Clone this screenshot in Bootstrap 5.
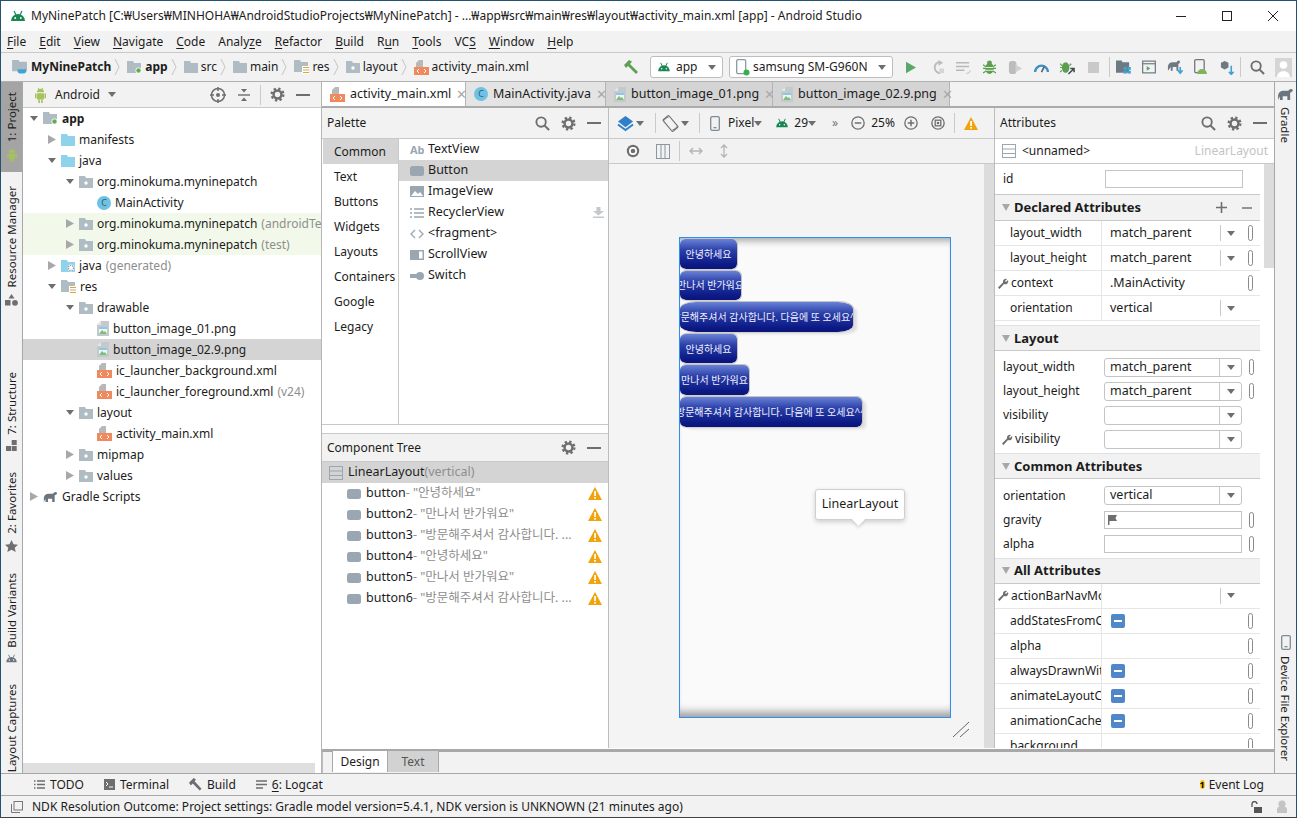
<!DOCTYPE html>
<html lang="en">
<head>
  <meta charset="UTF-8" />
  <meta name="viewport" content="width=device-width, initial-scale=1" />
  <title>MyNinePatch - Android Studio</title>
  <link href="https://cdn.jsdelivr.net/npm/bootstrap@5.3.0/dist/css/bootstrap.min.css" rel="stylesheet" />
  <style>
    html, body { margin: 0; width: 1297px; height: 818px; overflow: hidden; background: #f2f2f2; }
    body { font-family: "Noto Sans", "Noto Sans CJK KR", sans-serif; font-size: 12px; color: #1c1c1c; line-height: 1; }
    svg { flex: none; display: block; }
    u { text-underline-offset: 2px; }
    .ide-window { width: 1297px; height: 818px; border: 1px solid #23536f; border-bottom-color: #444; display: flex; flex-direction: column; }
    .title-row { height: 30px; background: #fff; padding-left: 9px; gap: 5px; flex: none; }
    .win-btns { margin-left: auto; }
    .win-btns div { width: 46px; display: flex; justify-content: center; }
    .menu-row { height: 22px; flex: none; padding-left: 6px; gap: 13px; border-bottom: 1px solid #c9c9c9; }
    .crumb-row { height: 29px; flex: none; padding-left: 11px; border-bottom: 1px solid #b0b0b0; }
    .crumb-row b { font-weight: 700; }
    .crumb { gap: 3px; }
    .crumb-sep { margin: 0 7px 0 3px; }
    .combo-btn { height: 22px; border: 1px solid #bdbdbd; border-radius: 3px; background: #fff; padding: 0 6px; }
    .combo-app { width: 73px; margin-left: 11px; gap: 5px; }
    .combo-dev { width: 164px; margin-left: 6px; gap: 3px; white-space: nowrap; }
    .caret-d { width: 0; height: 0; border-left: 4px solid transparent; border-right: 4px solid transparent; border-top: 5px solid #6e6e6e; flex: none; }
    .combo-btn .caret-d { margin-left: auto; }
    .run-icons { margin-left: 5px; }
    .slot { width: 26px; height: 20px; display: flex; align-items: center; justify-content: center; flex: none; }
    .tool-sep { width: 1px; height: 20px; background: #c9c9c9; flex: none; }
    .main-row { flex: 1 1 0; min-height: 0; display: flex; }
    .side-strip { width: 22px; flex: none; border-right: 1px solid #a8a8a8; display: flex; flex-direction: column; align-items: center; overflow: hidden; }
    .vtab { width: 21px; padding: 10px 0; display: flex; flex-direction: column-reverse; align-items: center; gap: 6px; }
    .vtab.active { background: #a4a4a4; }
    .vtab span { writing-mode: vertical-rl; transform: rotate(180deg); white-space: nowrap; font-size: 11.5px; }
    .gap-a { margin-top: 4px; }
    .gap-b { margin-top: 46px; }
    .gap-c { margin-top: 1px; }
    .right-strip { border-right: 0; border-left: 1px solid #a8a8a8; width: 22px; justify-content: space-between; }
    .right-strip .vtab { flex-direction: column; padding: 6px 0 12px; }
    .right-strip .vtab span { transform: none; }
    .project-pane { width: 299px; flex: none; border-right: 1px solid #b5b5b5; display: flex; flex-direction: column; background: #fff; }
    .pane-head { height: 26px; flex: none; background: #f2f2f2; border-bottom: 1px solid #c9c9c9; padding: 0 5px 0 11px; }
    .pane-head .slot { width: 26px; }
    .tree-list { flex: 1 1 0; min-height: 0; }
    .tree-row { height: 21px; display: flex; align-items: center; white-space: nowrap; overflow: hidden; }
    .tree-row .arrow { width: 18px; display: flex; justify-content: center; flex: none; }
    .tree-row .node { margin-right: 4px; }
    .d0 { padding-left: 2px; } .d1 { padding-left: 20px; } .d2 { padding-left: 38px; } .d3 { padding-left: 56px; }
    .no-arrow { width: 18px; flex: none; }
    .tree-row.sel, .pal-item.sel, .pal-cat.sel, .comp-row.sel { background: #d4d4d4; }
    .tree-row.test { background: #f2f9ea; }
    .hint { color: #8e8e8e; margin-left: 4px; }
    .tree-scroll { height: 10px; width: 292px; background: #dfdfdf; flex: none; }
    .work-col { flex: 1 1 0; min-width: 0; display: flex; flex-direction: column; }
    .tab-row { height: 26px; flex: none; border-bottom: 2px solid #ababab; }
    .file-tab { height: 24px; display: flex; align-items: center; gap: 5px; padding-left: 8px; border-right: 1px solid #b5b5b5; background: #d4d4d4; font-size: 12.5px; white-space: nowrap; }
    .file-tab.on { background: #fff; }
    .file-tab.mid { background: #e4e4e4; }
    .tab-a { width: 144px; } .tab-b { width: 140px; } .tab-c { width: 167px; } .tab-d { width: 177px; }
    .file-tab .tab-x { margin-left: auto; margin-right: 6px; color: #a9a9a9; font-size: 13px; }
    .edit-row { flex: 1 1 0; min-height: 0; display: flex; border-bottom: 1px solid #fff; }
    .left-col { width: 287px; flex: none; display: flex; flex-direction: column; border-right: 1px solid #bdbdbd; background: #fff; }
    .palette-box { height: 317px; flex: none; display: flex; flex-direction: column; border-bottom: 1px solid #c9c9c9; }
    .sub-head { height: 31px; flex: none; background: #f2f2f2; border-bottom: 1px solid #c9c9c9; padding: 0 0 0 5px; }
    .sub-head .tools { margin-left: auto; display: flex; padding-right: 1px; }
    .palette-body { flex: 1 1 0; display: flex; min-height: 0; }
    .pal-cats { width: 77px; flex: none; border-right: 1px solid #c9c9c9; }
    .pal-cat { height: 25px; display: flex; align-items: center; padding-left: 11px; margin-left: 1px; }
    .pal-list { flex: 1 1 0; }
    .pal-item { height: 21px; display: flex; align-items: center; padding-left: 11px; gap: 4px; font-size: 12.5px; }
    .pal-item svg:last-child:not(:first-child) { margin-left: auto; margin-right: 4px; }
    .comp-box { flex: 1 1 0; margin-top: 8px; border-top: 1px solid #c9c9c9; padding-left: 0; }
    .comp-head { height: 28px; }
    .comp-row { height: 21px; display: flex; align-items: center; white-space: nowrap; padding-left: 25px; font-size: 12.5px; }
    .comp-row.sel { padding-left: 7px; gap: 5px; }
    .comp-row .btn-ico { margin-right: 5px; }
    .comp-row .warn-ico { margin-left: auto; margin-right: 6px; }
    .comp-row .quote { color: #8e8e8e; }
    .design-col { width: 386px; flex: none; display: flex; flex-direction: column; border-right: 1px solid #bdbdbd; }
    .design-tools { height: 31px; flex: none; background: #f2f2f2; border-bottom: 1px solid #c9c9c9; padding-left: 8px; }
    .design-tools2 { height: 25px; }
    .l2 { margin-left: 2px; } .l3 { margin-left: 3px; } .l5 { margin-left: 5px; } .l6 { margin-left: 6px; } .l8 { margin-left: 8px; }
    .l9 { margin-left: 9px; } .l10 { margin-left: 10px; } .l11 { margin-left: 11px; } .l13 { margin-left: 13px; } .l16 { margin-left: 16px; } .l7 { margin-left: 7px; } .l12 { margin-left: 12px; }
    .surface-row { flex: 1 1 0; min-height: 0; display: flex; background: #f4f4f4; }
    .surface { flex: 1 1 0; padding: 73px 0 0 70px; position: relative; }
    .surface-bar { width: 10px; background: #dcdcdc; flex: none; }
    .device-frame { width: 272px; height: 481px; border: 1px solid #2f8df0; background: #fafafa; position: relative; box-shadow: inset 0 9px 7px -6px #a9a9a9, inset 0 -11px 8px -6px #9d9d9d; display: flex; flex-direction: column; align-items: flex-start; }
    .nine-btn { height: 31.6px; flex: none; border: 1px solid #c4c4c4; border-left: 0; border-bottom-color: #d0d0d0; display: flex; align-items: center; justify-content: center; white-space: nowrap; overflow: hidden; color: #eef0ff; font-size: 10px; background: linear-gradient(#6a82d6, #2b3fa8 38%, #0c1a86 85%, #0a1478); border-radius: 6px; background-clip: padding-box; }
    .nb-57 { width: 58px; } .nb-61 { width: 62px; } .nb-173 { width: 174px; border-radius: 16px / 8px; box-shadow: 5px 3px 3px -2px #ddd; }
    .nb-69 { width: 70px; } .nb-182 { width: 183px; box-shadow: 5px 3px 3px -2px #ddd; }
    .frame-tip { position: absolute; left: 135px; top: 251px; width: 90px; height: 31px; background: #fff; border: 1px solid #cfcfcf; border-radius: 3px; box-shadow: 0 2px 5px rgba(0,0,0,.18); display: flex; align-items: center; justify-content: center; font-size: 12.5px; }
    .frame-tip::after { content: ""; position: absolute; left: 38px; bottom: -5px; width: 9px; height: 9px; background: #fff; transform: rotate(45deg); box-shadow: 2px 2px 3px rgba(0,0,0,.1); }
    .resize-mark { position: absolute; left: 343px; top: 557px; }
    .attr-col { flex: 1 1 0; min-width: 0; display: flex; flex-direction: column; background: #fff; }
    .attr-top { height: 25px; flex: none; padding: 0 6px 0 7px; border-bottom: 1px solid #c9c9c9; gap: 6px; }
    .attr-top .hint2 { margin-left: auto; color: #c4c4c4; }
    .attr-body { flex: 1 1 0; min-height: 0; display: flex; overflow: hidden; }
    .attr-scroll-wrap { width: 265px; flex: none; }
    .attr-track { width: 10px; margin-left: 4px; flex: none; }
    .attr-thumb { height: 104px; background: #dcdcdc; }
    .id-row { height: 31px; padding-left: 8px; border-bottom: 1px solid #c9c9c9; }
    .id-row .plain-box { margin-left: 92px; }
    .plain-box { width: 138px; height: 18px; border: 1px solid #c4c4c4; background: #fff; }
    .sec-head { height: 26px; background: #f2f2f2; border-bottom: 1px solid #c9c9c9; font-weight: 700; font-size: 13px; padding-left: 4px; gap: 3px; }
    .sec-head .sec-tools { margin-left: auto; margin-right: 0; display: flex; }
    .tri-d { width: 0; height: 0; border-left: 4px solid transparent; border-right: 4px solid transparent; border-top: 7px solid #a8a8a8; flex: none; margin: 0 1px 0 3px; }
    .prop-row { height: 25px; display: flex; align-items: center; border-bottom: 1px solid #e6e6e6; white-space: nowrap; }
    .prop-name { width: 107px; height: 100%; flex: none; display: flex; align-items: center; padding-left: 15px; border-right: 1px solid #e6e6e6; overflow: hidden; }
    .prop-name.tool { padding-left: 3px; gap: 2px; }
    .prop-val { flex: 1 1 0; display: flex; align-items: center; padding-left: 8px; height: 100%; position: relative; font-size: 12.5px; }
    .prop-val .blue-minus { margin-left: 1px; }
    .prop-drop { margin-left: auto; width: 21px; height: 16px; border-left: 1px solid #c9c9c9; display: flex; align-items: center; justify-content: center; margin-right: 19px; }
    .prop-drop + .link-pill { margin-left: 0; }
    .link-pill { width: 5px; height: 16px; border: 1px solid #8a8a8a; border-radius: 3px; background: #fff; flex: none; }
    .prop-val .link-pill { position: absolute; left: 146px; top: 4px; }
    .form-grid { padding: 7px 0 5px 8px; display: flex; flex-direction: column; gap: 5.6px; }
    .form-line { height: 18.4px; display: flex; align-items: center; white-space: nowrap; }
    .form-line .lbl { width: 101px; flex: none; }
    .form-line .lbl.tool { display: flex; align-items: center; gap: 2px; margin-left: -1px; width: 102px; }
    .mini-combo { width: 138px; height: 19px; border: 1px solid #c4c4c4; border-radius: 3px; background: #fff; display: flex; align-items: center; padding-left: 5px; font-size: 12.5px; }
    .mini-combo .drop { margin-left: auto; width: 22px; height: 100%; border-left: 1px solid #c9c9c9; display: flex; align-items: center; justify-content: center; }
    .form-line .link-pill { margin-left: 7px; }
    .plain-box.with-flag { display: flex; align-items: center; padding-left: 3px; }
    .design-line { height: 3px; flex: none; background: #a8a8a8; }
    .design-tabs { height: 21px; flex: none; padding-left: 9px; background: #f2f2f2; border-left: 1px solid #bdbdbd; }
    .mode-tab { height: 21px; display: flex; align-items: center; justify-content: center; border-right: 1px solid #a8a8a8; border-left: 1px solid #a8a8a8; margin-top: -1px; }
    .mode-a { width: 56px; background: #fff; } .mode-b { width: 51px; background: #d2d2d2; border-left: 0; color: #555; }
    .tool-row { height: 23px; flex: none; border-top: 1px solid #a8a8a8; border-bottom: 1px solid #a8a8a8; padding-left: 33px; }
    .tool-item { gap: 5px; margin-right: 20px; }
    .event-log { margin-left: auto; margin-right: 32px; gap: 4px; }
    .status-row { height: 21px; flex: none; padding-left: 10px; gap: 9px; white-space: nowrap; }
    .status-end { margin-left: auto; margin-right: 8px; gap: 14px; }
  </style>
</head>
<body>
  <svg width="0" height="0" class="position-absolute">
    <defs>
      <symbol id="i-droid" viewBox="0 0 16 12"><path d="M1 11a7 7 0 0 1 14 0z" fill="currentColor"/><path d="M4 1l2 4M12 1l-2 4" stroke="currentColor" stroke-width="1.2"/><circle cx="5.2" cy="8" r=".9" fill="#fff"/><circle cx="10.8" cy="8" r=".9" fill="#fff"/></symbol>
      <symbol id="i-robot" viewBox="0 0 14 18"><path d="M3 6a4 4 0 0 1 8 0z" fill="#a5c25c"/><path d="M4.5 1l1 2M9.5 1l-1 2" stroke="#a5c25c"/><rect x="3" y="7" width="8" height="7" rx="1" fill="#a5c25c"/><rect x="0.8" y="7" width="1.7" height="6" rx=".8" fill="#a5c25c"/><rect x="11.5" y="7" width="1.7" height="6" rx=".8" fill="#a5c25c"/><rect x="4.5" y="14" width="1.8" height="4" fill="#a5c25c"/><rect x="7.7" y="14" width="1.8" height="4" fill="#a5c25c"/></symbol>
      <symbol id="i-folder" viewBox="0 0 14 12"><path d="M0 0h6l1 2h7v10H0z" fill="#b0bcc3"/></symbol>
      <symbol id="i-pkg" viewBox="0 0 14 12"><path d="M0 0h6l1 2h7v10H0z" fill="#b0bcc3"/><circle cx="7" cy="7" r="1.7" fill="#fff"/></symbol>
      <symbol id="i-blue" viewBox="0 0 14 12"><path d="M0 0h6l1 2h7v10H0z" fill="#8fd2ec"/></symbol>
      <symbol id="i-gen" viewBox="0 0 14 12"><path d="M0 0h6l1 2h7v10H0z" fill="#8fd2ec"/><circle cx="10" cy="8" r="3.4" fill="#fff"/><circle cx="10" cy="8" r="2.6" fill="none" stroke="#8a98a2" stroke-width="1.4" stroke-dasharray="1.2 1"/></symbol>
      <symbol id="i-res" viewBox="0 0 15 14"><path d="M0 0h6l1 2h7v10H0z" fill="#b0bcc3"/><rect x="8" y="6" width="7" height="8" fill="#fff"/><path d="M9 7.5h6M9 10h6M9 12.5h6" stroke="#d9a54a" stroke-width="1"/></symbol>
      <symbol id="i-mod" viewBox="0 0 15 13"><path d="M0 0h6l1 2h7v10H0z" fill="#b0bcc3"/><circle cx="11.5" cy="9.5" r="3" fill="#fff"/><circle cx="11.5" cy="9.5" r="2.2" fill="#5fb04a"/></symbol>
      <symbol id="i-proj" viewBox="0 0 17 15"><path d="M0 0h7l1 2h8v10H0z" fill="#aebac2"/><path d="M6 10h9v2a2.5 2.5 0 0 1-2.5 2.5h-4A2.5 2.5 0 0 1 6 12z" fill="#3fa3d8"/></symbol>
      <symbol id="i-xml" viewBox="0 0 15 15"><path d="M5 0h4v7H2V3z" fill="#b8b8b8"/><rect x="0" y="7" width="15" height="8" fill="#f08a5d"/><path d="M5 9l-2 2 2 2M10 9l2 2-2 2" fill="none" stroke="#fff" stroke-width="1"/></symbol>
      <symbol id="i-png" viewBox="0 0 12 15"><path d="M4 0h8v15H0V4z" fill="#c3c9cc"/><path d="M4 0v4H0z" fill="#e6e6e6"/><rect x="2" y="6" width="8" height="7" fill="#eef6f8"/><path d="M2 13l3-4 2 2 1-1 2 3z" fill="#7cbf7a"/><rect x="2" y="6" width="8" height="2" fill="#8fc6e0"/></symbol>
      <symbol id="i-class" viewBox="0 0 14 14"><circle cx="7" cy="7" r="7" fill="#6ec2e3"/><text x="7" y="10" font-size="9" text-anchor="middle" fill="#3c5a6b" font-family="Noto Sans">C</text></symbol>
      <symbol id="i-gear" viewBox="0 0 16 16"><circle cx="8" cy="8" r="4.2" fill="none" stroke="#6e6e6e" stroke-width="2.6"/><circle cx="8" cy="8" r="6.3" fill="none" stroke="#6e6e6e" stroke-width="2.4" stroke-dasharray="2.5 2.45"/></symbol>
      <symbol id="i-search" viewBox="0 0 16 16"><circle cx="6.5" cy="6.5" r="5" fill="none" stroke="#6e6e6e" stroke-width="2"/><path d="M10 10l5 5" stroke="#6e6e6e" stroke-width="2.2"/></symbol>
      <symbol id="i-min" viewBox="0 0 14 2"><rect width="14" height="2" fill="#6e6e6e"/></symbol>
      <symbol id="i-warn" viewBox="0 0 14 13"><path d="M7 0l7 13H0z" fill="#f0a30a"/><rect x="6.2" y="4" width="1.7" height="5" fill="#fff"/><rect x="6.2" y="10" width="1.7" height="1.7" fill="#fff"/></symbol>
      <symbol id="i-target" viewBox="0 0 16 16"><circle cx="8" cy="8" r="6.5" fill="none" stroke="#6e6e6e" stroke-width="1.5"/><circle cx="8" cy="8" r="2" fill="#6e6e6e"/><path d="M8 0v4M8 12v4M0 8h4M12 8h4" stroke="#6e6e6e" stroke-width="1.5"/></symbol>
      <symbol id="i-collapse" viewBox="0 0 14 14"><path d="M1 7h12" stroke="#6e6e6e" stroke-width="1.4"/><path d="M4 1l3 3.5L10 1zM4 13l3-3.5 3 3.5z" fill="#6e6e6e"/></symbol>
      <symbol id="i-hammer" viewBox="0 0 16 16"><path d="M1 6l5-5 3 1.5-2 2.5 8 8-2 2-8-8-2 2z" fill="#5f9f55"/></symbol>
      <symbol id="i-phone" viewBox="0 0 10 15"><rect x=".7" y=".7" width="8.6" height="13.6" rx="1.4" fill="none" stroke="#7f8b93" stroke-width="1.3"/><rect x="3.5" y="11" width="3" height="1.3" fill="#7f8b93"/></symbol>
      <symbol id="i-phone-on" viewBox="0 0 14 17"><rect x=".7" y=".7" width="9" height="14" rx="1.4" fill="none" stroke="#8c98a0" stroke-width="1.3"/><circle cx="10.5" cy="13.5" r="3" fill="#35b14a"/></symbol>
      <symbol id="i-run" viewBox="0 0 12 14"><path d="M0 0l12 7-12 7z" fill="#59a869"/></symbol>
      <symbol id="i-rerun" viewBox="0 0 16 16"><path d="M11 2a6 6 0 1 0 0 12" fill="none" stroke="#bcbcbc" stroke-width="2"/><path d="M9 0l5 3-5 3z" fill="#bcbcbc"/><path d="M10 9h5v5h-5z" fill="#d6d6d6"/></symbol>
      <symbol id="i-lines" viewBox="0 0 16 16"><path d="M0 3h14M0 7h14M0 11h9" stroke="#b8b8b8" stroke-width="1.6"/><path d="M11 14a3 3 0 0 0 4-3" stroke="#b8b8b8" fill="none"/></symbol>
      <symbol id="i-bug" viewBox="0 0 14 16"><ellipse cx="7" cy="9" rx="4.5" ry="6" fill="#5a9e4e"/><circle cx="7" cy="3" r="2.6" fill="#5a9e4e"/><path d="M0 5l3 2M14 5l-3 2M0 9h3M14 9h-3M0 14l3-2M14 14l-3-2" stroke="#5a9e4e" stroke-width="1.3"/><path d="M3 8h8M3 11h8" stroke="#fff" stroke-width=".9"/></symbol>
      <symbol id="i-attach" viewBox="0 0 16 16"><rect x="1" y="1" width="8" height="14" rx="3" fill="#bcbcbc"/><path d="M8 5l7 4-7 4z" fill="#d0d0d0"/></symbol>
      <symbol id="i-gauge" viewBox="0 0 16 12"><path d="M1 11a7 7 0 0 1 14 0" fill="none" stroke="#3f8fc4" stroke-width="2.6"/><path d="M8 11l3-6" stroke="#5b6770" stroke-width="1.8"/></symbol>
      <symbol id="i-bug-arrow" viewBox="0 0 16 16"><ellipse cx="6" cy="8" rx="4" ry="5.5" fill="#5a9e4e"/><path d="M0 4l2 2M12 4l-2 2M0 8h2M0 13l2-2" stroke="#5a9e4e" stroke-width="1.3"/><path d="M9 15l6-6M11 9h4v4" stroke="#3c4a52" stroke-width="1.6" fill="none"/></symbol>
      <symbol id="i-stop" viewBox="0 0 12 12"><rect width="12" height="12" fill="#c9c9c9"/></symbol>
      <symbol id="i-struct" viewBox="0 0 16 14"><path d="M0 0h6l1 2h7v11H0z" fill="#6e7a82"/><rect x="8" y="7" width="3.4" height="3" fill="#3fa3d8"/><rect x="12.4" y="7" width="3.4" height="3" fill="#3fa3d8"/><rect x="8" y="11" width="3.4" height="3" fill="#3fa3d8"/><rect x="12.4" y="11" width="3.4" height="3" fill="#3fa3d8"/></symbol>
      <symbol id="i-frame" viewBox="0 0 15 14"><rect x=".7" y=".7" width="13.6" height="12.6" fill="none" stroke="#6e7a82" stroke-width="1.3"/><path d="M1 3.5h13" stroke="#6e7a82" stroke-width="1.3"/><path d="M5 6l4 2.5L5 11z" fill="#59a869"/></symbol>
      <symbol id="i-gradle" viewBox="0 0 18 14"><path d="M1 13V8a6 6 0 0 1 6-5h5a4 4 0 0 1 3-2c2 0 2.500 2 1 3l-2 1v8h-3V9H6v4H3V9z" fill="currentColor"/></symbol>
      <symbol id="i-gradle-sync" viewBox="0 0 18 16"><path d="M1 12V7a5 5 0 0 1 5-4h4a3 3 0 0 1 3-2l1 2-2 2v7h-2V8H6v4H4V8z" fill="#6e7a82"/><path d="M14 8v6M11.500 11.500l2.500 3 2.500-3" stroke="#3fa3d8" stroke-width="1.700" fill="none"/></symbol>
      <symbol id="i-phone-droid" viewBox="0 0 15 16"><rect x=".7" y=".7" width="9.500" height="13" rx="1.200" fill="none" stroke="#6e7a82" stroke-width="1.300"/><path d="M3 15a5 5 0 0 1 10 0z" fill="#7fb55a"/></symbol>
      <symbol id="i-box-down" viewBox="0 0 16 16"><path d="M1 3l4-2 4 2v5l-4 2-4-2z" fill="#6e7a82"/><path d="M12 6v9M9.500 12.500l2.500 3 2.500-3" stroke="#3fa3d8" stroke-width="1.700" fill="none"/></symbol>
      <symbol id="i-user" viewBox="0 0 17 19"><rect width="17" height="19" fill="#d5d5d5"/><circle cx="8.500" cy="7" r="3.800" fill="#fff"/><path d="M2 19a6.500 6 0 0 1 13 0z" fill="#fff"/></symbol>
      <symbol id="i-layers" viewBox="0 0 18 18"><path d="M9 1l8 6-8 6-8-6z" fill="#2f80c9"/><path d="M1 10l8 6 8-6" fill="none" stroke="#2f80c9" stroke-width="2"/></symbol>
      <symbol id="i-rotate" viewBox="0 0 18 18"><rect x="5" y="1" width="8" height="16" rx="1" transform="rotate(-40 9 9)" fill="none" stroke="#6e6e6e" stroke-width="1.200"/><path d="M2 6a8 8 0 0 1 5-4M16 12a8 8 0 0 1-5 4" stroke="#6e6e6e" fill="none"/></symbol>
      <symbol id="i-zoom-out" viewBox="0 0 15 15"><circle cx="7.500" cy="7.500" r="6.600" fill="none" stroke="#6e6e6e" stroke-width="1.400"/><path d="M4 7.500h7" stroke="#6e6e6e" stroke-width="1.600"/></symbol>
      <symbol id="i-zoom-in" viewBox="0 0 15 15"><circle cx="7.500" cy="7.500" r="6.600" fill="none" stroke="#6e6e6e" stroke-width="1.400"/><path d="M4 7.500h7M7.500 4v7" stroke="#6e6e6e" stroke-width="1.600"/></symbol>
      <symbol id="i-zoom-fit" viewBox="0 0 15 15"><circle cx="7.500" cy="7.500" r="6.600" fill="none" stroke="#6e6e6e" stroke-width="1.400"/><rect x="4.500" y="4.500" width="6" height="6" fill="none" stroke="#6e6e6e" stroke-width="1.400"/><circle cx="7.500" cy="7.500" r="1.400" fill="#6e6e6e"/></symbol>
      <symbol id="i-eye" viewBox="0 0 14 14"><circle cx="7" cy="7" r="6.200" fill="#6e6e6e"/><circle cx="7" cy="7" r="4" fill="#fff"/><circle cx="7" cy="7" r="2.300" fill="#6e6e6e"/></symbol>
      <symbol id="i-cols" viewBox="0 0 14 15"><rect x=".5" y=".5" width="13" height="14" fill="none" stroke="#8a979f"/><path d="M5 .5v14M9 .5v14" stroke="#8a979f"/></symbol>
      <symbol id="i-hdouble" viewBox="0 0 14 10"><path d="M1 5h12M4 2L1 5l3 3M10 2l3 3-3 3" fill="none" stroke="#b4b4b4" stroke-width="1.300"/></symbol>
      <symbol id="i-vdouble" viewBox="0 0 10 14"><path d="M5 1v12M2 4l3-3 3 3M2 10l3 3 3-3" fill="none" stroke="#b4b4b4" stroke-width="1.300"/></symbol>
      <symbol id="i-linear" viewBox="0 0 14 14"><rect x=".5" y=".5" width="13" height="13" fill="none" stroke="#9aa7af"/><path d="M.5 5h13M.5 9.500h13" stroke="#9aa7af"/></symbol>
      <symbol id="i-pbtn" viewBox="0 0 14 10"><rect width="14" height="10" rx="2.500" fill="#9aa7b2"/></symbol>
      <symbol id="i-pimg" viewBox="0 0 14 11"><rect width="14" height="11" fill="#9aa7b2"/><path d="M1 10l4-5 3 3 2-2 3 4z" fill="#fff"/></symbol>
      <symbol id="i-plist" viewBox="0 0 14 10"><path d="M4 1h10M4 5h10M4 9h10" stroke="#9aa7b2" stroke-width="1.500"/><path d="M0 1h2M0 5h2M0 9h2" stroke="#9aa7b2" stroke-width="1.500"/></symbol>
      <symbol id="i-pfrag" viewBox="0 0 14 10"><path d="M5 1L1 5l4 4M9 1l4 4-4 4" fill="none" stroke="#9aa7b2" stroke-width="1.300"/></symbol>
      <symbol id="i-pscroll" viewBox="0 0 14 10"><rect width="14" height="10" fill="#9aa7b2"/><rect x="9" y="1.500" width="3.500" height="7" fill="#fff"/></symbol>
      <symbol id="i-pswitch" viewBox="0 0 14 8"><rect y="2" width="8" height="4" fill="#9aa7b2"/><circle cx="10" cy="4" r="4" fill="#9aa7b2"/></symbol>
      <symbol id="i-download" viewBox="0 0 11 11"><path d="M3.500 0h4v4H11L5.500 8.500 0 4h3.500z" fill="#c3c8cc"/><rect y="9.500" width="11" height="1.500" fill="#c3c8cc"/></symbol>
      <symbol id="i-wrench" viewBox="0 0 11 11"><path d="M0 9.500L5 4.500a3 3 0 0 1 4-3.500L7 3l1 1 2-2a3 3 0 0 1-4 4L1.500 11z" fill="#6e6e6e"/></symbol>
      <symbol id="i-blue-minus" viewBox="0 0 14 14"><rect width="14" height="14" rx="2" fill="#4f87c8"/><rect x="3" y="6" width="8" height="2" fill="#fff"/></symbol>
      <symbol id="i-flag" viewBox="0 0 9 10"><path d="M0 0h9l-1.500 3L9 6H1.500v4H0z" fill="#6e6e6e"/></symbol>
      <symbol id="i-todo" viewBox="0 0 11 9"><path d="M3 1h8M3 4.500h8M3 8h8M0 1h1.500M0 4.500h1.500M0 8h1.500" stroke="#6e6e6e" stroke-width="1.300"/></symbol>
      <symbol id="i-term" viewBox="0 0 11 11"><rect width="11" height="11" fill="#6e6e6e"/><path d="M2 3l2 2-2 2" stroke="#fff" fill="none"/><path d="M5 8h4" stroke="#fff"/></symbol>
      <symbol id="i-build" viewBox="0 0 14 14"><path d="M0 5l5-5 2.500 1.500L6 3.500l7.500 8-2 2L4 6 2 8z" fill="#6e6e6e"/></symbol>
      <symbol id="i-log" viewBox="0 0 11 9"><path d="M0 1h11M0 4.500h11M0 8h7" stroke="#6e6e6e" stroke-width="1.400"/></symbol>
      <symbol id="i-status" viewBox="0 0 12 12"><rect x="3" y=".5" width="8.500" height="8.500" fill="none" stroke="#777"/><path d="M.5 3v8.500H9" fill="none" stroke="#777"/></symbol>
      <symbol id="i-lock" viewBox="0 0 11 12"><path d="M1 6V3a2.500 2.500 0 0 1 5 0" fill="none" stroke="#555" stroke-width="1.300"/><rect x="3" y="6" width="8" height="6" fill="#555"/></symbol>
      <symbol id="i-hector" viewBox="0 0 12 13"><circle cx="6" cy="4" r="3.600" fill="#c4c4c4"/><path d="M1 13V9a5 3 0 0 1 10 0v4z" fill="#c4c4c4"/></symbol>
      <symbol id="i-square-tree" viewBox="0 0 11 11"><path d="M0 11l5-6 3 1 3 5zM3 4l3-3 2 3-2 1z" fill="#6e6e6e"/></symbol>
      <symbol id="i-shapes" viewBox="0 0 13 12"><path d="M6.500 0l3 4.500h-6z" fill="#6e6e6e"/><rect x="0" y="6" width="5.500" height="5.500" fill="#6e6e6e"/><circle cx="10" cy="8.800" r="2.900" fill="#6e6e6e"/></symbol>
      <symbol id="i-blocks" viewBox="0 0 11 11"><rect x="5.700" y="0" width="5" height="5" fill="#6e6e6e"/><rect x="0" y="6" width="5" height="5" fill="#6e6e6e"/><rect x="5.700" y="6" width="5" height="5" fill="#6e6e6e"/></symbol>
      <symbol id="i-star" viewBox="0 0 13 12"><path d="M6.500 0l2 4.200 4.500.5-3.300 3 1 4.300-4.200-2.300L2.300 12l1-4.300L0 4.700l4.500-.5z" fill="#6e6e6e"/></symbol>
      <symbol id="i-capture" viewBox="0 0 14 14"><path d="M.5 11V.5H11" fill="none" stroke="#777"/><rect x="3" y="3" width="10" height="8" fill="none" stroke="#777"/><circle cx="9.500" cy="9.500" r="2.500" fill="#fff" stroke="#777"/><path d="M11 11l2.500 2.500" stroke="#777"/></symbol>
    </defs>
  </svg>

  <div class="ide-window">
    <div class="title-row d-flex align-items-center">
      <svg width="16" height="12" class="text-success"><use href="#i-droid"/></svg>
      <span id="win-title">MyNinePatch [C:₩Users₩MINHOHA₩AndroidStudioProjects₩MyNinePatch] - ...₩app₩src₩main₩res₩layout₩activity_main.xml [app] - Android Studio</span>
      <div class="win-btns d-flex align-items-center">
        <div><svg width="10" height="1"><rect width="10" height="1" fill="#222"/></svg></div>
        <div><svg width="10" height="10"><rect x=".5" y=".5" width="9" height="9" fill="none" stroke="#222"/></svg></div>
        <div><svg width="10" height="10"><path d="M0 0l10 10M10 0L0 10" stroke="#222"/></svg></div>
      </div>
    </div>

    <div class="menu-row d-flex align-items-center">
      <span><u>F</u>ile</span><span><u>E</u>dit</span><span><u>V</u>iew</span><span><u>N</u>avigate</span><span><u>C</u>ode</span><span>Analy<u>z</u>e</span><span><u>R</u>efactor</span><span><u>B</u>uild</span><span>R<u>u</u>n</span><span><u>T</u>ools</span><span>VC<u>S</u></span><span><u>W</u>indow</span><span><u>H</u>elp</span>
    </div>

    <div class="crumb-row d-flex align-items-center">
      <div class="d-flex align-items-center crumb"><svg width="16" height="14"><use href="#i-proj"/></svg><b>MyNinePatch</b></div>
      <svg class="crumb-sep" width="6" height="16"><path d="M1 0l4 8-4 8" fill="none" stroke="#c4c4c4"/></svg>
      <div class="d-flex align-items-center crumb"><svg width="15" height="13"><use href="#i-mod"/></svg><b>app</b></div>
      <svg class="crumb-sep" width="6" height="16"><path d="M1 0l4 8-4 8" fill="none" stroke="#c4c4c4"/></svg>
      <div class="d-flex align-items-center crumb"><svg width="14" height="12"><use href="#i-folder"/></svg><span>src</span></div>
      <svg class="crumb-sep" width="6" height="16"><path d="M1 0l4 8-4 8" fill="none" stroke="#c4c4c4"/></svg>
      <div class="d-flex align-items-center crumb"><svg width="14" height="12"><use href="#i-folder"/></svg><span>main</span></div>
      <svg class="crumb-sep" width="6" height="16"><path d="M1 0l4 8-4 8" fill="none" stroke="#c4c4c4"/></svg>
      <div class="d-flex align-items-center crumb"><svg width="15" height="14"><use href="#i-res"/></svg><span>res</span></div>
      <svg class="crumb-sep" width="6" height="16"><path d="M1 0l4 8-4 8" fill="none" stroke="#c4c4c4"/></svg>
      <div class="d-flex align-items-center crumb"><svg width="14" height="12"><use href="#i-pkg"/></svg><span>layout</span></div>
      <svg class="crumb-sep" width="6" height="16"><path d="M1 0l4 8-4 8" fill="none" stroke="#c4c4c4"/></svg>
      <div class="d-flex align-items-center crumb"><svg width="15" height="15"><use href="#i-xml"/></svg><span>activity_main.xml</span></div>

      <svg class="ms-auto" width="16" height="16"><use href="#i-hammer"/></svg>
      <div class="combo-btn combo-app d-flex align-items-center"><svg width="14" height="10" class="text-success"><use href="#i-droid"/></svg><span>app</span><i class="caret-d"></i></div>
      <div class="combo-btn combo-dev d-flex align-items-center"><svg width="14" height="17"><use href="#i-phone-on"/></svg><span>samsung SM-G960N</span><i class="caret-d"></i></div>
      <div class="run-icons d-flex align-items-center">
        <div class="slot"><svg width="10" height="13"><use href="#i-run"/></svg></div>
        <div class="slot"><svg width="15" height="15"><use href="#i-rerun"/></svg></div>
        <div class="slot"><svg width="15" height="15"><use href="#i-lines"/></svg></div>
        <div class="slot"><svg width="13" height="15"><use href="#i-bug"/></svg></div>
        <div class="slot"><svg width="15" height="15"><use href="#i-attach"/></svg></div>
        <div class="slot"><svg width="15" height="11"><use href="#i-gauge"/></svg></div>
        <div class="slot"><svg width="15" height="15"><use href="#i-bug-arrow"/></svg></div>
        <div class="slot"><svg width="11" height="11"><use href="#i-stop"/></svg></div>
        <div class="tool-sep l3"></div>
        <div class="slot"><svg width="15" height="14"><use href="#i-struct"/></svg></div>
        <div class="slot"><svg width="14" height="14"><use href="#i-frame"/></svg></div>
        <div class="slot"><svg width="17" height="16"><use href="#i-gradle-sync"/></svg></div>
        <div class="slot"><svg width="15" height="16"><use href="#i-phone-droid"/></svg></div>
        <div class="slot"><svg width="15" height="15"><use href="#i-box-down"/></svg></div>
        <div class="tool-sep"></div>
        <div class="slot l3"><svg width="15" height="15"><use href="#i-search"/></svg></div>
        <div class="slot"><svg width="17" height="19"><use href="#i-user"/></svg></div>
      </div>
    </div>

    <div class="main-row">
      <div class="side-strip">
        <div class="vtab active"><svg width="14" height="14"><use href="#i-robot"/></svg><span>1: Project</span></div>
        <div class="vtab gap-a"><svg width="13" height="12"><use href="#i-shapes"/></svg><span>Resource Manager</span></div>
        <div class="vtab gap-b"><svg width="11" height="11"><use href="#i-blocks"/></svg><span>7: Structure</span></div>
        <div class="vtab gap-c"><svg width="13" height="12"><use href="#i-star"/></svg><span>2: Favorites</span></div>
        <div class="vtab gap-c"><svg width="13" height="9" class="text-secondary"><use href="#i-droid"/></svg><span>Build Variants</span></div>
        <div class="vtab gap-c"><svg width="14" height="14"><use href="#i-capture"/></svg><span>Layout Captures</span></div>
      </div>

      <div class="project-pane">
        <div class="pane-head d-flex align-items-center">
          <svg width="13" height="16"><use href="#i-robot"/></svg>
          <span class="ms-2">Android</span><i class="caret-d ms-2"></i>
          <div class="slot ms-auto"><svg width="16" height="16"><use href="#i-target"/></svg></div>
          <div class="slot"><svg width="14" height="14"><use href="#i-collapse"/></svg></div>
          <div class="tool-sep l3"></div>
          <div class="slot l3"><svg width="15" height="15"><use href="#i-gear"/></svg></div>
          <div class="slot"><svg width="14" height="2"><use href="#i-min"/></svg></div>
        </div>
        <div class="tree-list">
          <div class="tree-row d0"><span class="arrow"><i class="caret-d"></i></span><svg class="node" width="15" height="13"><use href="#i-mod"/></svg><b>app</b></div>
          <div class="tree-row d1"><span class="arrow"><svg width="8" height="9"><path d="M0 0l8 4.500-8 4.500z" fill="#a8a8a8"/></svg></span><svg class="node" width="14" height="12"><use href="#i-blue"/></svg>manifests</div>
          <div class="tree-row d1"><span class="arrow"><i class="caret-d"></i></span><svg class="node" width="14" height="12"><use href="#i-blue"/></svg>java</div>
          <div class="tree-row d2"><span class="arrow"><i class="caret-d"></i></span><svg class="node" width="14" height="12"><use href="#i-pkg"/></svg>org.minokuma.myninepatch</div>
          <div class="tree-row d3"><span class="no-arrow"></span><svg class="node" width="14" height="14"><use href="#i-class"/></svg>MainActivity</div>
          <div class="tree-row d2 test"><span class="arrow"><svg width="8" height="9"><path d="M0 0l8 4.500-8 4.500z" fill="#a8a8a8"/></svg></span><svg class="node" width="14" height="12"><use href="#i-pkg"/></svg>org.minokuma.myninepatch<span class="hint">(androidTest)</span></div>
          <div class="tree-row d2 test"><span class="arrow"><svg width="8" height="9"><path d="M0 0l8 4.500-8 4.500z" fill="#a8a8a8"/></svg></span><svg class="node" width="14" height="12"><use href="#i-pkg"/></svg>org.minokuma.myninepatch<span class="hint">(test)</span></div>
          <div class="tree-row d1"><span class="arrow"><svg width="8" height="9"><path d="M0 0l8 4.500-8 4.500z" fill="#a8a8a8"/></svg></span><svg class="node" width="14" height="12"><use href="#i-gen"/></svg>java<span class="hint">(generated)</span></div>
          <div class="tree-row d1"><span class="arrow"><i class="caret-d"></i></span><svg class="node" width="15" height="14"><use href="#i-res"/></svg>res</div>
          <div class="tree-row d2"><span class="arrow"><i class="caret-d"></i></span><svg class="node" width="14" height="12"><use href="#i-pkg"/></svg>drawable</div>
          <div class="tree-row d3"><span class="no-arrow"></span><svg class="node" width="12" height="15"><use href="#i-png"/></svg>button_image_01.png</div>
          <div class="tree-row d3 sel"><span class="no-arrow"></span><svg class="node" width="12" height="15"><use href="#i-png"/></svg>button_image_02.9.png</div>
          <div class="tree-row d3"><span class="no-arrow"></span><svg class="node" width="15" height="15"><use href="#i-xml"/></svg>ic_launcher_background.xml</div>
          <div class="tree-row d3"><span class="no-arrow"></span><svg class="node" width="15" height="15"><use href="#i-xml"/></svg>ic_launcher_foreground.xml<span class="hint">(v24)</span></div>
          <div class="tree-row d2"><span class="arrow"><i class="caret-d"></i></span><svg class="node" width="14" height="12"><use href="#i-pkg"/></svg>layout</div>
          <div class="tree-row d3"><span class="no-arrow"></span><svg class="node" width="15" height="15"><use href="#i-xml"/></svg>activity_main.xml</div>
          <div class="tree-row d2"><span class="arrow"><svg width="8" height="9"><path d="M0 0l8 4.500-8 4.500z" fill="#a8a8a8"/></svg></span><svg class="node" width="14" height="12"><use href="#i-pkg"/></svg>mipmap</div>
          <div class="tree-row d2"><span class="arrow"><svg width="8" height="9"><path d="M0 0l8 4.500-8 4.500z" fill="#a8a8a8"/></svg></span><svg class="node" width="14" height="12"><use href="#i-pkg"/></svg>values</div>
          <div class="tree-row d0"><span class="arrow"><svg width="8" height="9"><path d="M0 0l8 4.500-8 4.500z" fill="#a8a8a8"/></svg></span><svg class="node text-secondary" width="15" height="12"><use href="#i-gradle"/></svg>Gradle Scripts</div>
        </div>
        <div class="tree-scroll"></div>
      </div>

      <div class="work-col">
        <div class="tab-row d-flex">
          <div class="file-tab on tab-a"><svg width="15" height="15"><use href="#i-xml"/></svg>activity_main.xml<span class="tab-x">✕</span></div>
          <div class="file-tab mid tab-b"><svg width="14" height="14"><use href="#i-class"/></svg>MainActivity.java<span class="tab-x">✕</span></div>
          <div class="file-tab tab-c"><svg width="12" height="15"><use href="#i-png"/></svg>button_image_01.png<span class="tab-x">✕</span></div>
          <div class="file-tab tab-d"><svg width="12" height="15"><use href="#i-png"/></svg>button_image_02.9.png<span class="tab-x">✕</span></div>
        </div>

        <div class="edit-row">
          <div class="left-col">
            <div class="palette-box">
              <div class="sub-head d-flex align-items-center">
                <span>Palette</span>
                <div class="tools">
                  <div class="slot"><svg width="15" height="15"><use href="#i-search"/></svg></div>
                  <div class="slot"><svg width="15" height="15"><use href="#i-gear"/></svg></div>
                  <div class="slot"><svg width="14" height="2"><use href="#i-min"/></svg></div>
                </div>
              </div>
              <div class="palette-body">
                <div class="pal-cats">
                  <div class="pal-cat sel">Common</div><div class="pal-cat">Text</div><div class="pal-cat">Buttons</div><div class="pal-cat">Widgets</div><div class="pal-cat">Layouts</div><div class="pal-cat">Containers</div><div class="pal-cat">Google</div><div class="pal-cat">Legacy</div>
                </div>
                <div class="pal-list">
                  <div class="pal-item"><svg width="14" height="11" viewBox="0 0 14 11"><text x="0" y="10" font-size="11" font-weight="700" fill="#9aa7b2" font-family="Noto Sans">Ab</text></svg>TextView</div>
                  <div class="pal-item sel"><svg width="14" height="10"><use href="#i-pbtn"/></svg>Button</div>
                  <div class="pal-item"><svg width="14" height="11"><use href="#i-pimg"/></svg>ImageView</div>
                  <div class="pal-item"><svg width="14" height="10"><use href="#i-plist"/></svg>RecyclerView<svg width="11" height="11"><use href="#i-download"/></svg></div>
                  <div class="pal-item"><svg width="14" height="10"><use href="#i-pfrag"/></svg>&lt;fragment&gt;</div>
                  <div class="pal-item"><svg width="14" height="10"><use href="#i-pscroll"/></svg>ScrollView</div>
                  <div class="pal-item"><svg width="14" height="8"><use href="#i-pswitch"/></svg>Switch</div>
                </div>
              </div>
            </div>
            <div class="comp-box">
              <div class="sub-head comp-head d-flex align-items-center">
                <span>Component Tree</span>
                <div class="tools">
                  <div class="slot"><svg width="15" height="15"><use href="#i-gear"/></svg></div>
                  <div class="slot"><svg width="14" height="2"><use href="#i-min"/></svg></div>
                </div>
              </div>
              <div class="comp-row sel"><svg width="14" height="14"><use href="#i-linear"/></svg><span>LinearLayout<span class="quote">(vertical)</span></span></div>
              <div class="comp-row"><svg class="btn-ico" width="14" height="10"><use href="#i-pbtn"/></svg>button<span class="quote">- "안녕하세요"</span><svg class="warn-ico" width="14" height="13"><use href="#i-warn"/></svg></div>
              <div class="comp-row"><svg class="btn-ico" width="14" height="10"><use href="#i-pbtn"/></svg>button2<span class="quote">- "만나서 반가워요"</span><svg class="warn-ico" width="14" height="13"><use href="#i-warn"/></svg></div>
              <div class="comp-row"><svg class="btn-ico" width="14" height="10"><use href="#i-pbtn"/></svg>button3<span class="quote">- "방문해주셔서 감사합니다. ...</span><svg class="warn-ico" width="14" height="13"><use href="#i-warn"/></svg></div>
              <div class="comp-row"><svg class="btn-ico" width="14" height="10"><use href="#i-pbtn"/></svg>button4<span class="quote">- "안녕하세요"</span><svg class="warn-ico" width="14" height="13"><use href="#i-warn"/></svg></div>
              <div class="comp-row"><svg class="btn-ico" width="14" height="10"><use href="#i-pbtn"/></svg>button5<span class="quote">- "만나서 반가워요"</span><svg class="warn-ico" width="14" height="13"><use href="#i-warn"/></svg></div>
              <div class="comp-row"><svg class="btn-ico" width="14" height="10"><use href="#i-pbtn"/></svg>button6<span class="quote">- "방문해주셔서 감사합니다. ...</span><svg class="warn-ico" width="14" height="13"><use href="#i-warn"/></svg></div>
            </div>
          </div>

          <div class="design-col">
            <div class="design-tools d-flex align-items-center">
              <svg width="17" height="17"><use href="#i-layers"/></svg><i class="caret-d l2"></i>
              <div class="tool-sep l11"></div>
              <svg class="l6" width="17" height="17"><use href="#i-rotate"/></svg><i class="caret-d l2"></i>
              <div class="tool-sep l10"></div>
              <svg class="l10" width="10" height="15"><use href="#i-phone"/></svg>
              <span class="l8">Pixel</span><i class="caret-d"></i>
              <svg class="l13 text-success" width="14" height="10"><use href="#i-droid"/></svg>
              <span class="l5">29</span><i class="caret-d"></i>
              <span class="l16 text-secondary">»</span>
              <svg class="l13" width="14" height="14"><use href="#i-zoom-out"/></svg>
              <span class="l6">25%</span>
              <svg class="l9" width="14" height="14"><use href="#i-zoom-in"/></svg>
              <svg class="l13" width="14" height="14"><use href="#i-zoom-fit"/></svg>
              <div class="tool-sep l9"></div>
              <svg class="l9" width="14" height="13"><use href="#i-warn"/></svg>
            </div>
            <div class="design-tools design-tools2 d-flex align-items-center">
              <svg width="14" height="14" class="l9"><use href="#i-eye"/></svg>
              <svg class="l16" width="14" height="15"><use href="#i-cols"/></svg>
              <div class="tool-sep l9"></div>
              <svg class="l9" width="14" height="10"><use href="#i-hdouble"/></svg>
              <svg class="l16" width="10" height="14"><use href="#i-vdouble"/></svg>
            </div>
            <div class="surface-row">
              <div class="surface">
                <div class="device-frame">
                  <div class="nine-btn nb-57">안녕하세요</div>
                  <div class="nine-btn nb-61">만나서 반가워요</div>
                  <div class="nine-btn nb-173">방문해주셔서 감사합니다. 다음에 또 오세요^^</div>
                  <div class="nine-btn nb-57">안녕하세요</div>
                  <div class="nine-btn nb-69">만나서 반가워요</div>
                  <div class="nine-btn nb-182">방문해주셔서 감사합니다. 다음에 또 오세요^^</div>
                  <div class="frame-tip">LinearLayout</div>
                </div>
                <svg class="resize-mark" width="18" height="17"><path d="M1 16L17 1M8 16L17 8" stroke="#666" fill="none"/></svg>
              </div>
              <div class="surface-bar"></div>
            </div>
          </div>

          <div class="attr-col">
            <div class="sub-head d-flex align-items-center"><span>Attributes</span>
              <div class="tools">
                <div class="slot"><svg width="15" height="15"><use href="#i-search"/></svg></div>
                <div class="slot"><svg width="15" height="15"><use href="#i-gear"/></svg></div>
                <div class="slot"><svg width="14" height="2"><use href="#i-min"/></svg></div>
              </div>
            </div>
            <div class="attr-top d-flex align-items-center"><svg width="14" height="14"><use href="#i-linear"/></svg><span>&lt;unnamed&gt;</span><span class="hint2">LinearLayout</span></div>
            <div class="attr-body">
              <div class="attr-scroll-wrap">
                <div class="id-row d-flex align-items-center"><span>id</span><div class="plain-box"></div></div>
                <div class="sec-head d-flex align-items-center"><i class="tri-d"></i><span>Declared Attributes</span>
                  <div class="sec-tools">
                    <div class="slot"><svg width="11" height="11"><path d="M5.500 0v11M0 5.500h11" stroke="#6e6e6e" stroke-width="1.600"/></svg></div>
                    <div class="slot"><svg width="10" height="2"><use href="#i-min"/></svg></div>
                  </div>
                </div>
                <div class="prop-row"><div class="prop-name">layout_width</div><div class="prop-val">match_parent<div class="prop-drop"><i class="caret-d"></i></div><i class="link-pill"></i></div></div>
                <div class="prop-row"><div class="prop-name">layout_height</div><div class="prop-val">match_parent<div class="prop-drop"><i class="caret-d"></i></div><i class="link-pill"></i></div></div>
                <div class="prop-row"><div class="prop-name tool"><svg width="11" height="11"><use href="#i-wrench"/></svg>context</div><div class="prop-val">.MainActivity<i class="link-pill"></i></div></div>
                <div class="prop-row"><div class="prop-name">orientation</div><div class="prop-val">vertical<div class="prop-drop"><i class="caret-d"></i></div></div></div>
                <div class="sec-head d-flex align-items-center mt-1 border-top"><i class="tri-d"></i><span>Layout</span></div>
                <div class="form-grid">
                  <div class="form-line"><span class="lbl">layout_width</span><div class="mini-combo">match_parent<span class="drop"><i class="caret-d"></i></span></div><i class="link-pill"></i></div>
                  <div class="form-line"><span class="lbl">layout_height</span><div class="mini-combo">match_parent<span class="drop"><i class="caret-d"></i></span></div><i class="link-pill"></i></div>
                  <div class="form-line"><span class="lbl">visibility</span><div class="mini-combo"><span class="drop"><i class="caret-d"></i></span></div></div>
                  <div class="form-line"><span class="lbl tool"><svg width="11" height="11"><use href="#i-wrench"/></svg>visibility</span><div class="mini-combo"><span class="drop"><i class="caret-d"></i></span></div></div>
                </div>
                <div class="sec-head d-flex align-items-center border-top"><i class="tri-d"></i><span>Common Attributes</span></div>
                <div class="form-grid">
                  <div class="form-line"><span class="lbl">orientation</span><div class="mini-combo">vertical<span class="drop"><i class="caret-d"></i></span></div></div>
                  <div class="form-line"><span class="lbl">gravity</span><div class="plain-box with-flag"><svg width="9" height="10"><use href="#i-flag"/></svg></div><i class="link-pill"></i></div>
                  <div class="form-line"><span class="lbl">alpha</span><div class="plain-box"></div><i class="link-pill"></i></div>
                </div>
                <div class="sec-head d-flex align-items-center border-top"><i class="tri-d"></i><span>All Attributes</span></div>
                <div class="prop-row"><div class="prop-name tool"><svg width="11" height="11"><use href="#i-wrench"/></svg>actionBarNavMode</div><div class="prop-val"><div class="prop-drop"><i class="caret-d"></i></div></div></div>
                <div class="prop-row"><div class="prop-name">addStatesFromChildren</div><div class="prop-val"><svg class="blue-minus" width="14" height="14"><use href="#i-blue-minus"/></svg><i class="link-pill"></i></div></div>
                <div class="prop-row"><div class="prop-name">alpha</div><div class="prop-val"><i class="link-pill"></i></div></div>
                <div class="prop-row"><div class="prop-name">alwaysDrawnWithCache</div><div class="prop-val"><svg class="blue-minus" width="14" height="14"><use href="#i-blue-minus"/></svg><i class="link-pill"></i></div></div>
                <div class="prop-row"><div class="prop-name">animateLayoutChanges</div><div class="prop-val"><svg class="blue-minus" width="14" height="14"><use href="#i-blue-minus"/></svg><i class="link-pill"></i></div></div>
                <div class="prop-row"><div class="prop-name">animationCache</div><div class="prop-val"><svg class="blue-minus" width="14" height="14"><use href="#i-blue-minus"/></svg><i class="link-pill"></i></div></div>
                <div class="prop-row"><div class="prop-name">background</div><div class="prop-val"><i class="link-pill"></i></div></div>
              </div>
              <div class="attr-track"><div class="attr-thumb"></div></div>
            </div>
          </div>
        </div>

        <div class="design-line"></div>
        <div class="design-tabs d-flex">
          <div class="mode-tab mode-a">Design</div>
          <div class="mode-tab mode-b">Text</div>
        </div>
      </div>

      <div class="side-strip right-strip">
        <div class="vtab"><svg width="17" height="13" class="text-secondary"><use href="#i-gradle"/></svg><span>Gradle</span></div>
        <div class="vtab"><svg width="10" height="15"><use href="#i-phone"/></svg><span>Device File Explorer</span></div>
      </div>
    </div>

    <div class="tool-row d-flex align-items-center">
      <div class="tool-item d-flex align-items-center"><svg width="11" height="9"><use href="#i-todo"/></svg>TODO</div>
      <div class="tool-item d-flex align-items-center"><svg width="11" height="11"><use href="#i-term"/></svg>Terminal</div>
      <div class="tool-item d-flex align-items-center"><svg width="13" height="13"><use href="#i-build"/></svg>Build</div>
      <div class="tool-item d-flex align-items-center"><svg width="11" height="9"><use href="#i-log"/></svg><span><u>6</u>: Logcat</span></div>
      <div class="event-log d-flex align-items-center"><span class="badge rounded-circle text-bg-warning p-0 d-flex align-items-center justify-content-center" id="log-count">1</span>Event Log</div>
    </div>

    <div class="status-row d-flex align-items-center">
      <svg width="12" height="12"><use href="#i-status"/></svg>
      <span>NDK Resolution Outcome: Project settings: Gradle model version=5.4.1, NDK version is UNKNOWN (21 minutes ago)</span>
      <div class="status-end d-flex align-items-center"><svg width="11" height="12"><use href="#i-lock"/></svg><svg width="12" height="13"><use href="#i-hector"/></svg></div>
    </div>
  </div>
</body>
</html>
